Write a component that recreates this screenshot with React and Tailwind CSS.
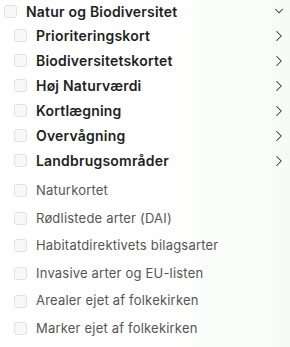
import { ChevronDown, ChevronRight } from 'lucide-react';

const groups = [
  'Prioriteringskort',
  'Biodiversitetskortet',
  'Høj Naturværdi',
  'Kortlægning',
  'Overvågning',
  'Landbrugsområder',
];

const layers = [
  'Naturkortet',
  'Rødlistede arter (DAI)',
  'Habitatdirektivets bilagsarter',
  'Invasive arter og EU-listen',
  'Arealer ejet af folkekirken',
  'Marker ejet af folkekirken',
];

const Box = () => (
  <span className="w-[13px] h-[13px] shrink-0 rounded-[3px] border border-[#e2e2e2] bg-[#f8f8f8]" />
);

export default function App() {
  return (
    <div
      className="w-[290px] h-[347px] overflow-hidden bg-gradient-to-r from-white via-white to-[#f7fbf6] text-[#1f1f1f]"
      style={{ fontFamily: "Inter, 'Noto Sans', sans-serif" }}
    >
      <div className="flex items-center h-[22px] pl-[4px] pr-[4px]">
        <Box />
        <span className="ml-[9px] text-[14px] font-semibold tracking-[0.2px]">Natur og Biodiversitet</span>
        <ChevronDown className="ml-auto w-[14px] h-[14px] text-[#333]" strokeWidth={1.8} />
      </div>

      <div className="flex flex-col mt-[1px]">
        {groups.map((g) => (
          <div key={g} className="flex items-center h-[25px] pl-[14px] pr-[2px]">
            <Box />
            <span className="ml-[9px] text-[14px] font-semibold tracking-[0.2px]">{g}</span>
            <ChevronRight className="ml-auto w-[18px] h-[18px] text-[#333]" strokeWidth={1.4} />
          </div>
        ))}
      </div>

      <div className="flex flex-col mt-[4px]">
        {layers.map((l) => (
          <div key={l} className="flex items-center h-[27.6px] pl-[14px]">
            <Box />
            <span className="ml-[9px] text-[13px] text-[#555] tracking-[0.2px]">{l}</span>
          </div>
        ))}
      </div>
    </div>
  );
}
